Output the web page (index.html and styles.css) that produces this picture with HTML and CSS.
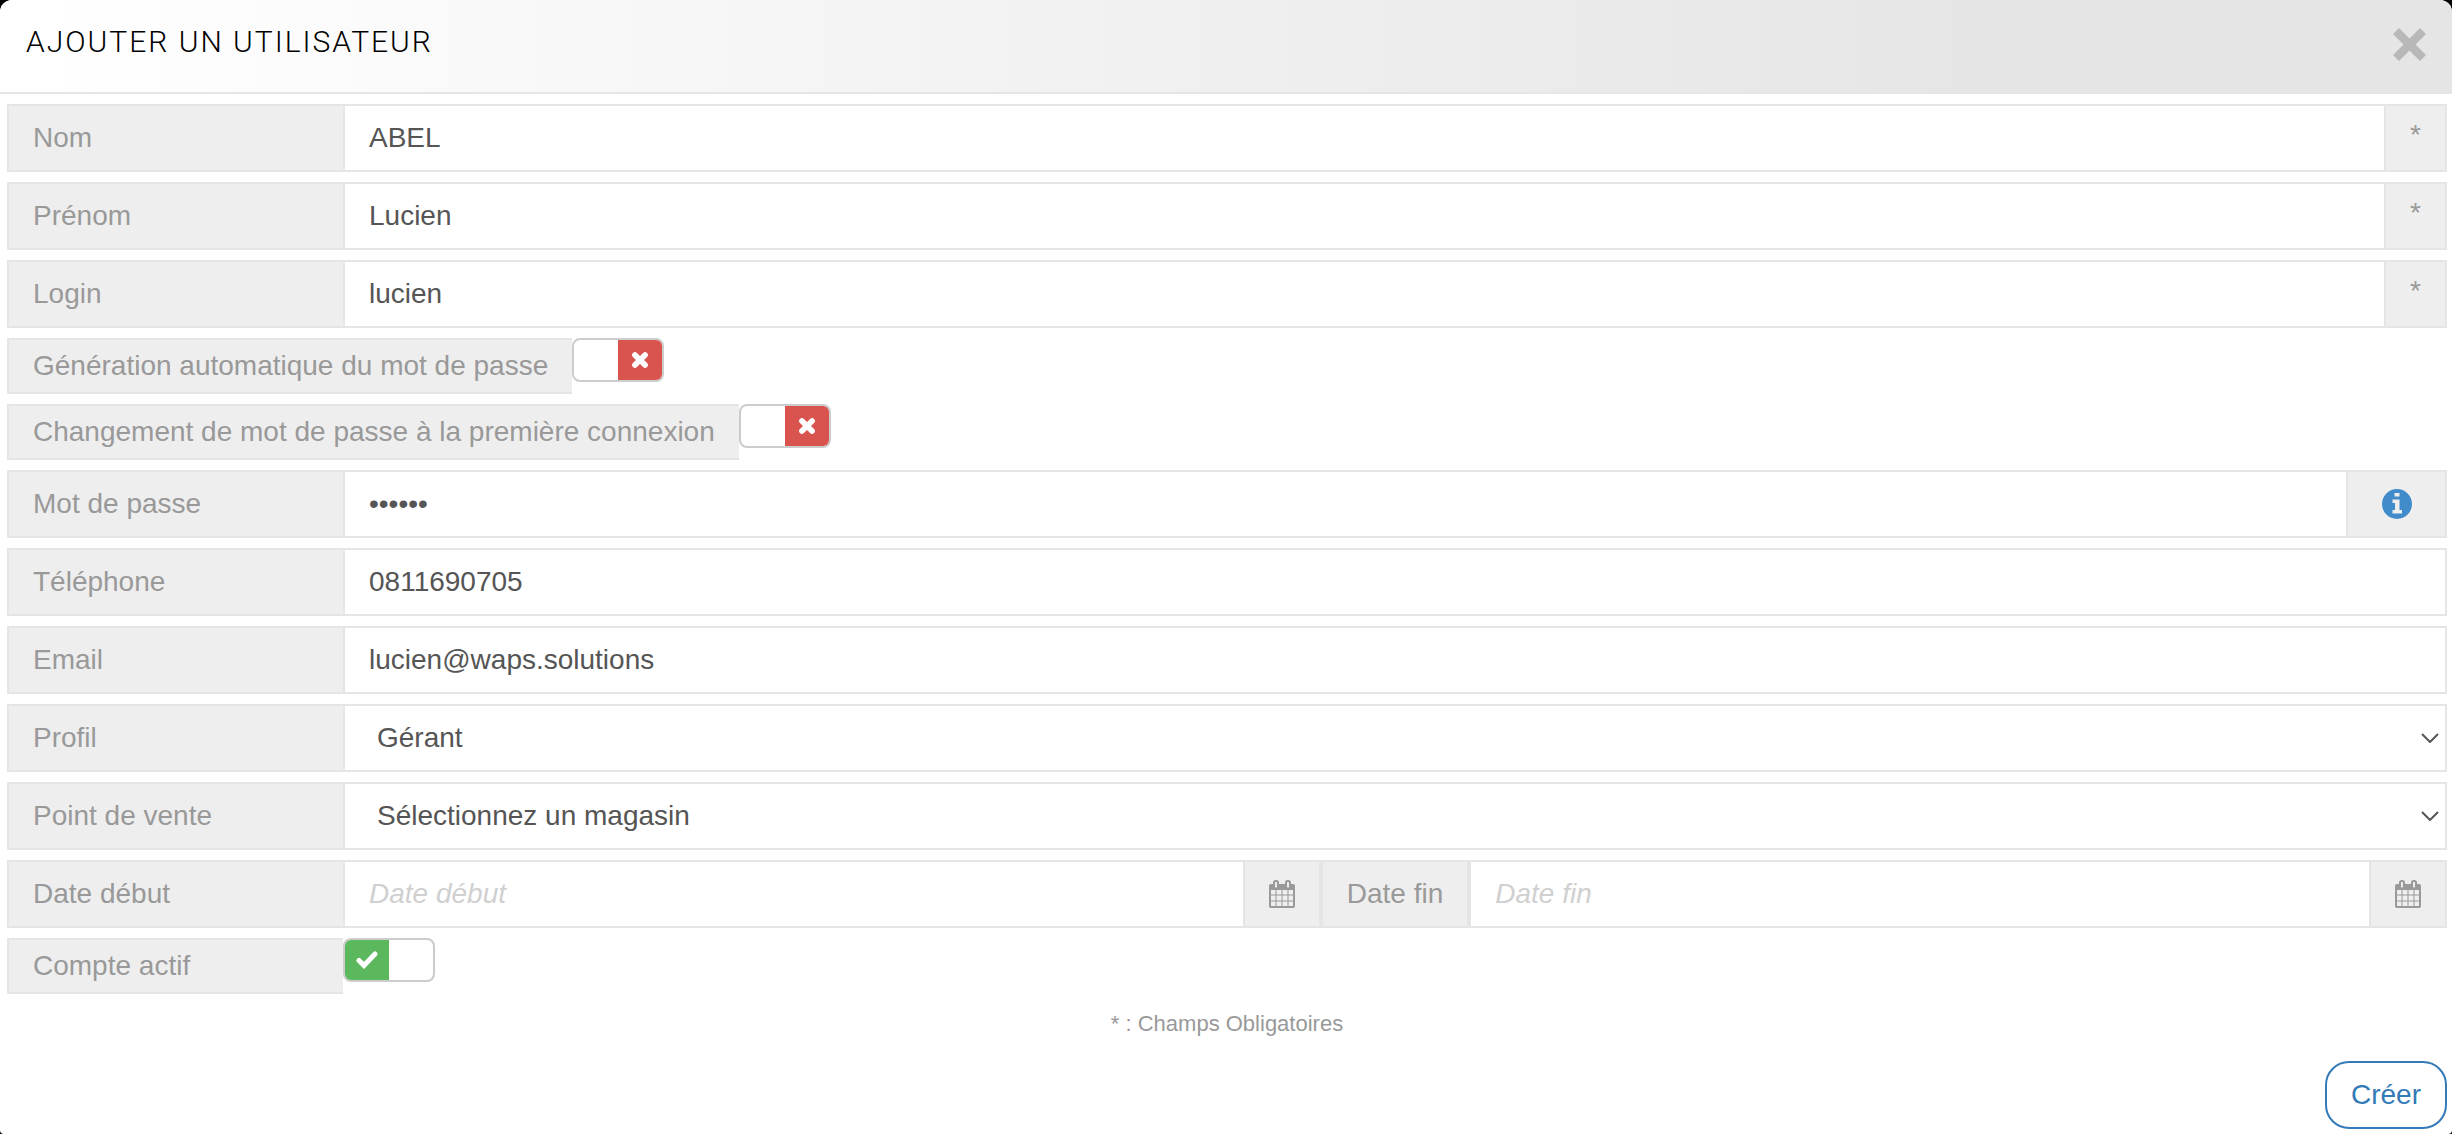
FILE: index.html
```html
<!DOCTYPE html>
<html lang="fr">
<head>
<meta charset="utf-8">
<meta name="viewport" content="width=device-width, initial-scale=1">
<title>Ajouter un utilisateur</title>
<link rel="stylesheet" href="styles.css">
</head>
<body>
<svg class="sprite" aria-hidden="true">
  <symbol id="calendar" viewBox="0 0 1664 1792">
    <path d="M128 1664h288v-288h-288v288zM480 1664h320v-288h-320v288zM128 1312h288v-320h-288v320zM480 1312h320v-320h-320v320zM128 928h288v-288h-288v288zM864 1664h320v-288h-320v288zM480 928h320v-288h-320v288zM1248 1664h288v-288h-288v288zM864 1312h320v-320h-320v320zM512 448v-288q0-13-9.500-22.500t-22.500-9.500h-64q-13 0-22.500 9.500t-9.500 22.500v288q0 13 9.500 22.500t22.500 9.500h64q13 0 22.500-9.500t9.500-22.500zM1248 1312h288v-320h-288v320zM864 928h320v-288h-320v288zM1248 928h288v-288h-288v288zM1280 448v-288q0-13-9.500-22.500t-22.500-9.500h-64q-13 0-22.500 9.500t-9.500 22.500v288q0 13 9.500 22.500t22.500 9.500h64q13 0 22.500-9.500t9.500-22.500zM1664 384v1280q0 52-38 90t-90 38h-1408q-52 0-90-38t-38-90v-1280q0-52 38-90t90-38h128v-96q0-66 47-113t113-47h64q66 0 113 47t47 113v96h384v-96q0-66 47-113t113-47h64q66 0 113 47t47 113v96h128q52 0 90 38t38 90z"/>
  </symbol>
  <symbol id="cross" viewBox="0 0 16 16">
    <path d="M3.500 3.500 12.500 12.500M12.500 3.500 3.500 12.500"/>
  </symbol>
  <symbol id="check" viewBox="0 0 22 18">
    <path d="M3 9.500l5 5L19 3"/>
  </symbol>
</svg>
<main class="modal">
  <header class="modal-header">
    <h1 class="modal-title">AJOUTER UN UTILISATEUR</h1>
    <button class="close" type="button" aria-label="Fermer"><svg viewBox="0 0 33 33"><path d="M6 0 16.500 10.500 27 0 33 6 22.500 16.500 33 27 27 33 16.500 22.500 6 33 0 27 10.500 16.500 0 6Z"/></svg></button>
  </header>
  <form class="form">
    <div class="row">
      <label class="label" for="nom">Nom</label>
      <input class="field" id="nom" type="text" value="ABEL">
      <span class="addon required">*</span>
    </div>
    <div class="row">
      <label class="label" for="prenom">Prénom</label>
      <input class="field" id="prenom" type="text" value="Lucien">
      <span class="addon required">*</span>
    </div>
    <div class="row">
      <label class="label" for="login">Login</label>
      <input class="field" id="login" type="text" value="lucien">
      <span class="addon required">*</span>
    </div>
    <div class="row row-switch">
      <label class="label" for="generation">Génération automatique du mot de passe</label>
      <span class="switch">
        <input class="switch-input" id="generation" type="checkbox">
        <span class="switch-on"><svg><use href="#check"/></svg></span>
        <span class="switch-off"><svg><use href="#cross"/></svg></span>
      </span>
    </div>
    <div class="row row-switch">
      <label class="label" for="changement">Changement de mot de passe à la première connexion</label>
      <span class="switch">
        <input class="switch-input" id="changement" type="checkbox">
        <span class="switch-on"><svg><use href="#check"/></svg></span>
        <span class="switch-off"><svg><use href="#cross"/></svg></span>
      </span>
    </div>
    <div class="row">
      <label class="label" for="motdepasse">Mot de passe</label>
      <input class="field" id="motdepasse" type="password" value="lucien">
      <button class="addon info" type="button" aria-label="Informations"><svg viewBox="0 0 30 30"><circle cx="15" cy="15" r="15"/><path class="cutout" d="M12.500 4h5v3.500h-5zM10.500 10.500h7v10.500h2.500v3.500h-9.500v-3.500h2.500v-7h-2.500z"/></svg></button>
    </div>
    <div class="row">
      <label class="label" for="telephone">Téléphone</label>
      <input class="field" id="telephone" type="tel" value="0811690705">
    </div>
    <div class="row">
      <label class="label" for="email">Email</label>
      <input class="field" id="email" type="email" value="lucien@waps.solutions">
    </div>
    <div class="row">
      <label class="label" for="profil">Profil</label>
      <span class="select">
        <select class="field" id="profil"><option>Gérant</option></select>
        <svg class="chevron" viewBox="0 0 18 10"><path d="M1 1l8 8 8-8"/></svg>
      </span>
    </div>
    <div class="row">
      <label class="label" for="magasin">Point de vente</label>
      <span class="select">
        <select class="field" id="magasin"><option>Sélectionnez un magasin</option></select>
        <svg class="chevron" viewBox="0 0 18 10"><path d="M1 1l8 8 8-8"/></svg>
      </span>
    </div>
    <div class="row">
      <label class="label" for="debut">Date début</label>
      <input class="field" id="debut" type="text" placeholder="Date début">
      <button class="addon date" type="button" aria-label="Choisir la date de début"><svg><use href="#calendar"/></svg></button>
      <label class="label label-end" for="fin">Date fin</label>
      <input class="field" id="fin" type="text" placeholder="Date fin">
      <button class="addon date" type="button" aria-label="Choisir la date de fin"><svg><use href="#calendar"/></svg></button>
    </div>
    <div class="row row-switch">
      <label class="label" for="actif">Compte actif</label>
      <span class="switch">
        <input class="switch-input" id="actif" type="checkbox" checked>
        <span class="switch-on"><svg><use href="#check"/></svg></span>
        <span class="switch-off"><svg><use href="#cross"/></svg></span>
      </span>
    </div>
    <p class="note">* : Champs Obligatoires</p>
    <div class="actions"><button class="submit" type="submit">Créer</button></div>
  </form>
</main>
</body>
</html>
```
FILE: styles.css
```css
* {
  box-sizing: border-box;
}

body {
  margin: 0;
  background: #000;
  color: #555;
  font: 28px/40px "Liberation Sans", Arial, sans-serif;
}

.sprite {
  display: none;
}

.modal {
  min-height: 100vh;
  overflow: hidden;
  border-radius: 12px 12px 4px 4px;
  background: #fff;
}

.modal-header {
  display: flex;
  justify-content: space-between;
  align-items: flex-start;
  height: 94px;
  padding: 22px 26px;
  border-bottom: 2px solid #e5e5e5;
  background: linear-gradient(90deg, #fff 2%, #e5e5e5 82%);
}

.modal-title {
  margin: 0;
  color: #000;
  font: 300 30px/40px Roboto, "Liberation Sans", sans-serif;
  letter-spacing: 2px;
}

.close {
  display: flex;
  margin: 6px 0 0;
  padding: 0;
  border: 0;
  background: none;
}

.close svg {
  width: 33px;
  height: 33px;
  fill: #b8b8b8;
}

.form {
  display: flex;
  flex-direction: column;
  gap: 10px;
  padding: 10px 5px 5px 7px;
}

.row {
  display: flex;
  height: 68px;
}

.label,
.addon {
  display: flex;
  flex: none;
  align-items: center;
  border: 2px solid #e5e5e5;
  background: #eee;
  color: #999;
}

.label {
  min-width: 338px;
  padding: 0 24px;
}

.row .label-end {
  min-width: 0;
  border-right-width: 4px;
}

.field {
  flex: 1;
  min-width: 0;
  width: 100%;
  height: 100%;
  margin: 0;
  padding: 0 24px;
  border: 2px solid #e5e5e5;
  border-left: 0;
  border-radius: 0;
  outline: 0;
  background: #fff;
  color: #555;
  font: inherit;
}

.field::placeholder {
  color: #d0d0d0;
  font-style: italic;
  opacity: 1;
}

.addon {
  justify-content: center;
  border-left: 0;
  font: inherit;
}

.required {
  width: 61px;
  padding-bottom: 6px;
  font-size: 28px;
}

.info {
  width: 99px;
}

.info svg {
  width: 30px;
  height: 30px;
  fill: #428bca;
}

.info .cutout {
  fill: #eee;
}

.date {
  width: 76px;
  padding: 0;
}

.date svg {
  width: 26px;
  height: 28px;
  fill: #999;
}

.select {
  position: relative;
  display: flex;
  flex: 1;
}

.select .field {
  appearance: none;
  padding-left: 32px;
}

.chevron {
  position: absolute;
  top: 29px;
  right: 8px;
  width: 18px;
  height: 10px;
  fill: none;
  stroke: #555;
  stroke-width: 2;
  pointer-events: none;
}

.row-switch {
  height: 56px;
}

.row-switch .label {
  min-width: 336px;
  border-right: 0;
}

.switch {
  position: relative;
  display: flex;
  width: 92px;
  height: 44px;
  overflow: hidden;
  border: 2px solid #ccc;
  border-radius: 8px;
  background: #fff;
}

.switch-input {
  position: absolute;
  inset: 0;
  width: 100%;
  height: 100%;
  margin: 0;
  opacity: 0;
}

.switch-on,
.switch-off {
  display: flex;
  flex: 1;
  align-items: center;
  justify-content: center;
  visibility: hidden;
}

.switch-on {
  background: #5cb85c;
}

.switch-off {
  background: #d9534f;
}

.switch svg {
  width: 22px;
  height: 18px;
  fill: none;
  stroke: #fff;
  stroke-width: 5;
  stroke-linecap: round;
}

.switch-input:checked ~ .switch-on,
.switch-input:not(:checked) ~ .switch-off {
  visibility: visible;
}

.note {
  margin: 0;
  color: #999;
  font-size: 22px;
  text-align: center;
}

.actions {
  display: flex;
  justify-content: flex-end;
  margin-top: 7px;
}

.submit {
  height: 68px;
  padding: 0 24px;
  border: 2px solid #337ab7;
  border-radius: 24px;
  background: #fff;
  color: #337ab7;
  font: inherit;
}
```
